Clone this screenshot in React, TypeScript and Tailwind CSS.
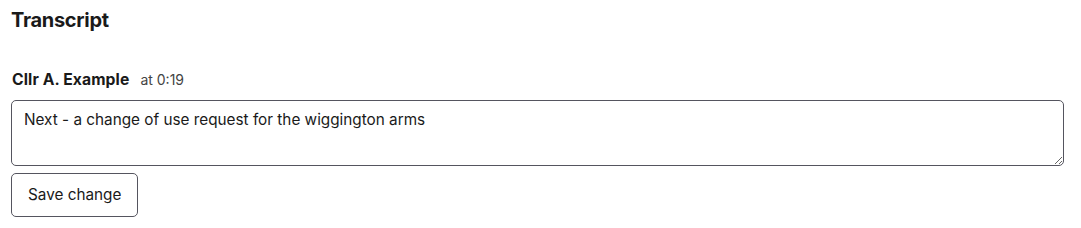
export default function App() {
  return (
    <div className="bg-white px-[11px] pt-[8px] text-[#1a1a1a]" style={{ fontFamily: "Inter, 'Liberation Sans', sans-serif" }}>
      <h2 className="text-[20px] font-bold leading-[24px] tracking-[-0.3px]">Transcript</h2>
      <div className="mt-[37px] flex items-baseline gap-[11px] pl-[1px]">
        <span className="text-[15.7px] font-bold leading-[20px] tracking-[0.1px]">Cllr A. Example</span>
        <span className="text-[14px] text-[#444]">at 0:19</span>
      </div>
      <textarea
        className="mt-[10px] block h-[66px] w-[1053px] rounded-[5px] border border-[#55555f] px-[12px] py-[9px] text-[15.3px] leading-[20px] text-[#1a1a1a] outline-none"
        defaultValue="Next - a change of use request for the wiggington arms"
      />
      <button className="mt-[7px] h-[44px] rounded-[5px] border border-[#55555f] bg-white px-[16px] text-[15.3px] text-[#1a1a1a]">
        Save change
      </button>
    </div>
  )
}
